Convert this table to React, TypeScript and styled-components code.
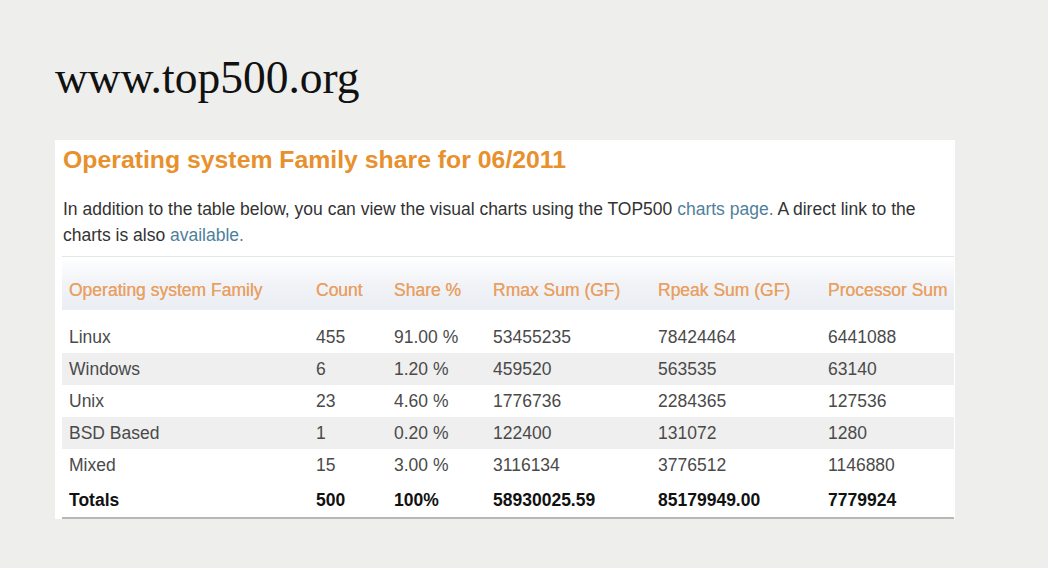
import React from 'react'
import styled, { createGlobalStyle } from 'styled-components'

const GlobalStyle = createGlobalStyle`
    html, body {
        margin: 0;
        padding: 0;
        background: #eeeeec;
    }
`

const Page = styled.div`
    width: 1048px;
    height: 568px;
    box-sizing: border-box;
    padding: 53px 0 0 55px;
    background: #eeeeec;
    overflow: hidden;
`

const SiteTitle = styled.h1`
    margin: 0;
    font-family: 'Liberation Serif', 'Times New Roman', serif;
    font-weight: normal;
    font-size: 45.5px;
    line-height: 50px;
    color: #111;
`

const Card = styled.section`
    margin-top: 37px;
    width: 900px;
    box-sizing: border-box;
    padding: 5px 1px 0 8px;
    background: #fff;
    font-family: 'Liberation Sans', Arial, sans-serif;
`

const CardTitle = styled.h2`
    margin: 0;
    font-size: 24.8px;
    line-height: 30px;
    font-weight: bold;
    color: #e8902c;
`

const Intro = styled.p`
    margin: 21px 0 0;
    font-size: 17.5px;
    line-height: 26px;
    color: #333;
`

const Link = styled.a`
    color: #4f7f9c;
    text-decoration: none;
`

const Table = styled.table`
    margin: 8px 0 0 -1px;
    width: 892px;
    border-collapse: collapse;
    table-layout: fixed;
    border-top: 1px solid #e6e6e6;
    border-bottom: 2px solid #b7b7b7;
    font-size: 17.5px;
`

const Col = styled.col<{ w: number }>`
    width: ${(p) => p.w}px;
`

const HeadRow = styled.tr`
    background: linear-gradient(#ffffff 0%, #f1f3f7 45%, #e9ecf1 100%);
`

const HeadCell = styled.th`
    padding: 23px 0 10px 7px;
    border-bottom: 11px solid #fff;
    text-align: left;
    font-weight: normal;
    line-height: 20px;
    color: #e9a062;
    white-space: nowrap;
    text-shadow: 0 0 0.4px #e9a062;
`

const BodyRow = styled.tr<{ shaded?: boolean }>`
    background: ${(p) => (p.shaded ? '#efefef' : '#fff')};
`

const Cell = styled.td<{ total?: boolean }>`
    padding: ${(p) => (p.total ? '3px 0 1px 7px' : '0 0 0 7px')};
    height: 32px;
    line-height: 32px;
    white-space: nowrap;
    font-weight: ${(p) => (p.total ? 'bold' : 'normal')};
    color: ${(p) => (p.total ? '#111' : '#4a4a4a')};
`

const widths = [247, 78, 99, 165, 170, 133]

const headers = [
    'Operating system Family',
    'Count',
    'Share %',
    'Rmax Sum (GF)',
    'Rpeak Sum (GF)',
    'Processor Sum',
]

const rows = [
    ['Linux', '455', '91.00 %', '53455235', '78424464', '6441088'],
    ['Windows', '6', '1.20 %', '459520', '563535', '63140'],
    ['Unix', '23', '4.60 %', '1776736', '2284365', '127536'],
    ['BSD Based', '1', '0.20 %', '122400', '131072', '1280'],
    ['Mixed', '15', '3.00 %', '3116134', '3776512', '1146880'],
]

const totals = ['Totals', '500', '100%', '58930025.59', '85179949.00', '7779924']

export default function App() {
    return (
        <Page>
            <GlobalStyle />
            <SiteTitle>www.top500.org</SiteTitle>
            <Card>
                <CardTitle>Operating system Family share for 06/2011</CardTitle>
                <Intro>
                    In addition to the table below, you can view the visual
                    charts using the TOP500 <Link href="#">charts page.</Link>{' '}
                    A direct link to the charts is also{' '}
                    <Link href="#">available.</Link>
                </Intro>
                <Table>
                    <colgroup>
                        {widths.map((w, i) => (
                            <Col key={i} w={w} />
                        ))}
                    </colgroup>
                    <thead>
                        <HeadRow>
                            {headers.map((h) => (
                                <HeadCell key={h}>{h}</HeadCell>
                            ))}
                        </HeadRow>
                    </thead>
                    <tbody>
                        {rows.map((r, i) => (
                            <BodyRow key={r[0]} shaded={i % 2 === 1}>
                                {r.map((c, j) => (
                                    <Cell key={j}>{c}</Cell>
                                ))}
                            </BodyRow>
                        ))}
                        <BodyRow>
                            {totals.map((c, j) => (
                                <Cell key={j} total>
                                    {c}
                                </Cell>
                            ))}
                        </BodyRow>
                    </tbody>
                </Table>
            </Card>
        </Page>
    )
}
